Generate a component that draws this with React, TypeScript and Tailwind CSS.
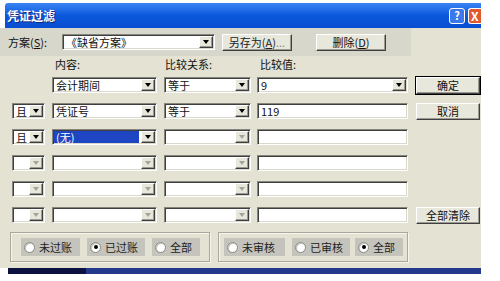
import React from 'react';

const sunken =
  'border border-t-[#85857c] border-l-[#85857c] border-b-white border-r-white shadow-[inset_1px_1px_0_#3f3f3f,inset_-1px_-1px_0_#dad9cd]';
const raised =
  'border border-t-white border-l-white border-b-[#3f3f3f] border-r-[#3f3f3f] shadow-[inset_-1px_-1px_0_#9b9a90] bg-[#e8e7dc]';

function Arrow({ disabled = false }: { disabled?: boolean }) {
  return (
    <div className={`m-[1px] flex w-[14px] shrink-0 items-center justify-center ${raised}`}>
      <span
        className={`h-0 w-0 border-x-[3px] border-t-[4px] border-x-transparent ${
          disabled ? 'border-t-[#a4a49c]' : 'border-t-black'
        }`}
      />
    </div>
  );
}

type ComboProps = {
  className: string;
  text?: string;
  disabled?: boolean;
  selected?: boolean;
  arrow?: boolean;
};

function Combo({ className, text = '', disabled = false, selected = false, arrow = true }: ComboProps) {
  return (
    <div className={`flex h-4 items-stretch bg-white ${sunken} ${className}`}>
      <div className="flex min-w-0 flex-1 items-center p-[1px]">
        <span
          className={`flex h-full w-full items-center pl-[2px] leading-none ${
            selected ? 'bg-[#1f46c2] text-white' : 'text-[#111]'
          }`}
        >
          {text}
        </span>
      </div>
      {arrow && <Arrow disabled={disabled} />}
    </div>
  );
}

function Button({
  label,
  className,
  isDefault = false,
}: {
  label: React.ReactNode;
  className: string;
  isDefault?: boolean;
}) {
  return (
    <div
      className={`flex items-center justify-center leading-none ${raised} ${
        isDefault ? 'outline outline-1 outline-black' : ''
      } ${className}`}
    >
      {label}
    </div>
  );
}

function Radio({ label, checked = false, className }: { label: string; checked?: boolean; className: string }) {
  return (
    <div className={`flex h-[18px] items-center gap-[4px] bg-[#c4c4bd] pl-[3px] text-[#222] ${className}`}>
      <span className="flex h-[11px] w-[11px] items-center justify-center rounded-full border border-[#8a8a82] bg-white shadow-[inset_1px_1px_0_#c8c8c0]">
        {checked && <span className="h-[4px] w-[4px] rounded-full bg-black" />}
      </span>
      <span className="leading-none">{label}</span>
    </div>
  );
}

type Row = {
  logic?: string | null;
  content: string;
  compare: string;
  value: string;
  valueCombo?: boolean;
  selected?: boolean;
  button?: { label: string; isDefault?: boolean };
};

const rows: Row[] = [
  { logic: null, content: '会计期间', compare: '等于', value: '9', valueCombo: true, button: { label: '确定', isDefault: true } },
  { logic: '且', content: '凭证号', compare: '等于', value: '119', button: { label: '取消' } },
  { logic: '且', content: '(无)', compare: '', value: '', selected: true },
  { logic: '', content: '', compare: '', value: '' },
  { logic: '', content: '', compare: '', value: '' },
  { logic: '', content: '', compare: '', value: '', button: { label: '全部清除' } },
];

export default function App() {
  return (
    <div className="relative h-[281px] w-[500px] overflow-hidden bg-white font-['Noto_Sans_CJK_SC','Noto_Sans',sans-serif] text-[11px]">
      <div className="w-[481px] pt-[3px]">
        {/* Title bar */}
        <div className="ml-[5px] flex h-[25px] items-center rounded-tl-[3px] bg-gradient-to-b from-[#3a84f2] via-[#0b58dd] to-[#0a4ed0] pl-[2px]">
          <span className="flex-1 text-[12px] font-bold leading-none text-white [text-shadow:1px_1px_0_#0a2a80]">凭证过滤</span>
          <div className="mr-[3px] flex h-[16px] w-[16px] items-center justify-center rounded-[3px] border border-white bg-[#3b78ea] text-[11px] font-bold leading-none text-white">
            ?
          </div>
          <div className="flex h-[16px] w-[13px] items-center justify-start overflow-hidden rounded-l-[3px] border border-r-0 border-white bg-[#e2582e] pl-[2px] text-[12px] font-bold leading-none text-white">
            X
          </div>
        </div>

        {/* Body */}
        <div className="flex h-[240px] flex-col bg-[#e3e2d3] text-[#111]">
          {/* Scheme toolbar */}
          <div className="flex h-[28px] w-[411px] items-center bg-[#d8d7cb]">
            <span className="ml-[8px] w-[54px] leading-none">
              方案(<span className="underline">S</span>):
            </span>
            <Combo className="w-[153px]" text="《缺省方案》" />
            <Button
              label={
                <>
                  另存为(<span className="underline">A</span>)<span className="text-[#8a8a80]">...</span>
                </>
              }
              className="ml-[7px] h-[17px] w-[70px] text-[#222]"
            />
            <Button
              label={
                <>
                  删除(<span className="underline">D</span>)
                </>
              }
              className="ml-[24px] h-[17px] w-[70px]"
            />
          </div>

          {/* Column headers */}
          <div className="flex h-[21px] items-start pt-[2px] leading-[13px]">
            <span className="ml-[55px] w-[110px]">内容:</span>
            <span className="w-[95px]">比较关系:</span>
            <span>比较值:</span>
          </div>

          {/* Condition rows */}
          <div className="flex flex-col gap-[10px]">
            {rows.map((r, i) => {
              const empty = r.logic === '';
              return (
                <div key={i} className="flex h-4 items-center">
                  {r.logic === null ? (
                    <div className="ml-[12px] w-[33px]" />
                  ) : (
                    <Combo className="ml-[12px] w-[33px]" text={r.logic} disabled={empty} />
                  )}
                  <Combo className="ml-[7px] w-[105px]" text={r.content} selected={r.selected} disabled={empty} />
                  <Combo className="ml-[7px] w-[87px]" text={r.compare} disabled={r.compare === ''} />
                  <Combo className="ml-[6px] w-[151px]" text={r.value} arrow={!!r.valueCombo} />
                  {r.button && (
                    <Button
                      label={r.button.label}
                      isDefault={r.button.isDefault}
                      className="ml-[8px] h-[17px] w-[64px]"
                    />
                  )}
                </div>
              );
            })}
          </div>

          {/* Status filters */}
          <div className="mt-[9px] flex">
            <div className="ml-[10px] flex h-[30px] w-[200px] items-center border border-[#a9a89c] shadow-[inset_1px_1px_0_#f6f6ee,1px_1px_0_#f6f6ee]">
              <Radio label="未过账" className="ml-[10px] w-[59px]" />
              <Radio label="已过账" checked className="ml-[7px] w-[58px]" />
              <Radio label="全部" className="ml-[7px] w-[48px]" />
            </div>
            <div className="ml-[8px] flex h-[30px] w-[190px] items-center border border-[#a9a89c] shadow-[inset_1px_1px_0_#f6f6ee,1px_1px_0_#f6f6ee]">
              <Radio label="未审核" className="ml-[5px] w-[61px]" />
              <Radio label="已审核" className="ml-[7px] w-[58px]" />
              <Radio label="全部" checked className="ml-[5px] w-[48px]" />
            </div>
          </div>
        </div>

        {/* Bottom frame edge */}
        <div className="ml-[8px] flex h-[6px]">
          <div className="w-[78px] bg-[#0b1240]" />
          <div className="flex-1 bg-[#24398c]" />
        </div>
      </div>
    </div>
  );
}
